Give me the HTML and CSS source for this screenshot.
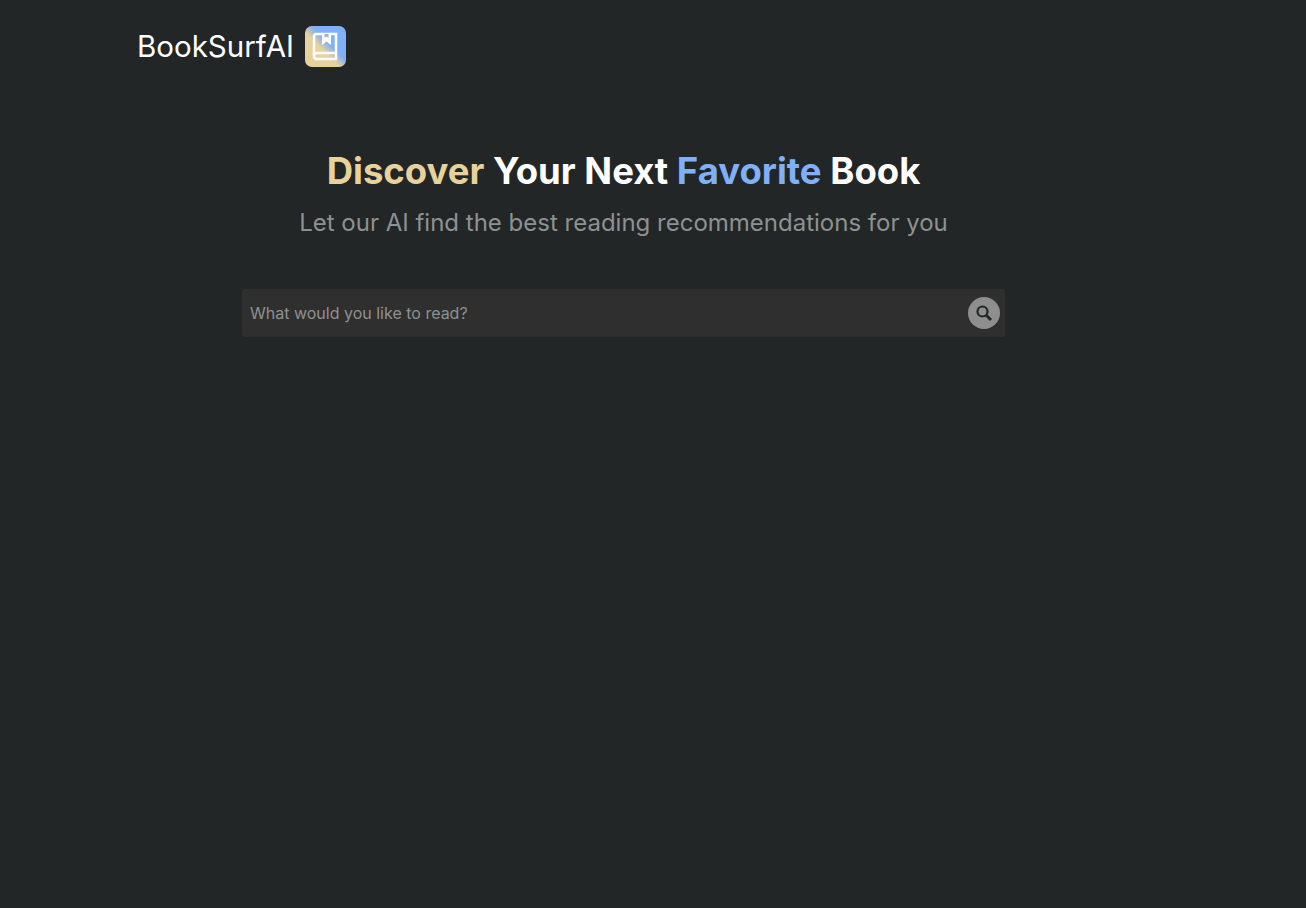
FILE: index.html
```html
<!DOCTYPE html>
<html lang="en">
<head>
  <meta charset="UTF-8" />
  <meta name="viewport" content="width=device-width, initial-scale=1.0"/>
  <title>BookSurfAI</title>
  <link rel="stylesheet" href="styles.css">
</head>
<body>
  <header class="topo">
    <span class="marca">BookSurfAI</span>
    <div class="logo">
      <svg width="41" height="41" viewBox="0 0 41 41" fill="none" stroke="#fff" stroke-width="2.500">
        <path d="M9 30V10.500Q9 8 11.500 8H31V33H12Q9 33 9 30Q9 27 12 27H31" />
        <path d="M17 8V19L21.500 15.500L26 19V8Z" fill="#fff" stroke="none"/>
        <path d="M19.500 8V12L21.500 10.500L23.500 12V8Z" fill="#8fb4e8" stroke="none"/>
      </svg>
    </div>
  </header>

  <main class="principal">
    <h1 class="titulo"><span class="dourado">Discover</span> Your Next <span class="azul">Favorite</span> Book</h1>
    <p class="subtitulo">Let our AI find the best reading recommendations for you</p>

    <form class="busca">
      <input type="text" placeholder="What would you like to read?" />
      <button type="button" class="buscar" aria-label="Search">
        <svg width="18" height="18" viewBox="0 0 18 18" fill="none" stroke="#222627" stroke-width="2.200">
          <circle cx="7.500" cy="7.500" r="5"/>
          <path d="M11.300 11.300L16 16" stroke-width="2.800"/>
        </svg>
      </button>
    </form>
  </main>
</body>
</html>
```

FILE: styles.css
```css
body {
  margin: 0;
  min-height: 100vh;
  background: #222627;
  color: #fff;
  font-family: Inter, 'Noto Sans', sans-serif;
}
.topo {
  display: flex;
  align-items: center;
  gap: 11px;
  padding: 26px 0 0 137px;
  height: 41px;
}
.marca {
  font-size: 29.5px;
  line-height: 41px;
}
.logo {
  width: 41px;
  height: 41px;
  border-radius: 7px;
  background: linear-gradient(225deg, #7fb0f8 0%, #7fb0f8 42%, #e8d29c 58%, #e8d29c 100%);
}
.logo svg {
  display: block;
}
.principal {
  width: 763px;
  margin: 0 auto;
  padding: 81px 0 0;
  position: relative;
  left: -29.500px;
  display: flex;
  flex-direction: column;
  align-items: center;
}
.titulo {
  margin: 0;
  font-size: 36.500px;
  line-height: 46px;
  font-weight: 700;
  white-space: nowrap;
}
.dourado {
  color: #e8d29c;
}
.azul {
  color: #7fb0f8;
}
.subtitulo {
  margin: 13px 0 0;
  font-size: 24px;
  line-height: 32px;
  color: #8e9192;
  white-space: nowrap;
}
.busca {
  margin-top: 50px;
  width: 100%;
  height: 48px;
  box-sizing: border-box;
  padding: 0 5px 0 8px;
  background: #2f2f2f;
  border-radius: 3px;
  display: flex;
  align-items: center;
}
.busca input {
  flex: 1;
  background: transparent;
  border: none;
  outline: none;
  padding: 0;
  color: #fff;
  font-family: inherit;
  font-size: 16px;
}
.busca input::placeholder {
  color: #8e9192;
  opacity: 1;
}
.buscar {
  width: 32px;
  height: 32px;
  padding: 0;
  border: none;
  border-radius: 50%;
  background: #8e8e8e;
  display: flex;
  align-items: center;
  justify-content: center;
  cursor: pointer;
}
```
